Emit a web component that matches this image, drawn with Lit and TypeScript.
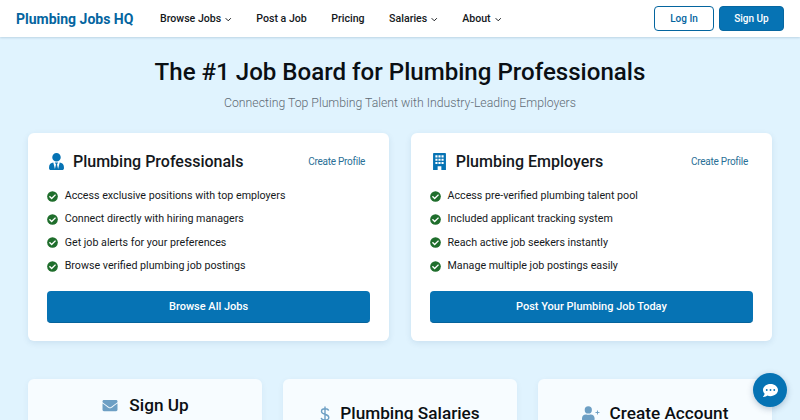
import { LitElement, css, html, svg } from 'lit'
import { customElement } from 'lit/decorators.js'

const chevron = html`<svg class="chev" viewBox="0 0 10 6"><path d="M1 1l4 4 4-4" fill="none" stroke="currentColor" stroke-width="1.5"/></svg>`

const check = html`<svg class="check" viewBox="0 0 512 512"><path fill="#1f6e2c" d="M256 8a248 248 0 1 0 0 496 248 248 0 0 0 0-496z"/><path fill="#fff" d="M227 387l184-184c6-6 6-16 0-22l-23-23c-6-6-16-6-22 0L216 308l-70-70c-6-6-16-6-22 0l-23 23c-6 6-6 16 0 22l104 104c6 6 16 6 22 0z"/></svg>`

const userTie = svg`<path d="M224 256a128 128 0 1 0 0-256 128 128 0 0 0 0 256zm96 32l-48 192-32-136 32-56H176l32 56-32 136-48-192C57 291 0 349 0 422v42c0 26 22 48 48 48h352c26 0 48-22 48-48v-42c0-73-57-131-128-134z"/>`

// solid block with three rows of windows and a door notch
const building = svg`<path fill-rule="evenodd" d="M60 0h328c17 0 30 13 30 30v482H280V400h-112v112H30V30C30 13 43 0 60 0zM100 70v64h64V70zm92 0v64h64V70zm92 0v64h64V70zM100 170v64h64v-64zm92 0v64h64v-64zm92 0v64h64v-64zM100 270v64h64v-64zm92 0v64h64v-64zm92 0v64h64v-64z"/>`

const envelope = svg`<path d="M502 190c4-3 10 0 10 5v205c0 26-22 48-48 48H48c-26 0-48-22-48-48V195c0-5 6-8 10-5 22 17 52 39 154 113 21 15 57 48 92 48s72-33 92-48c102-74 132-96 154-113zM256 320c23 0 57-29 73-41 133-97 143-105 174-129 6-5 9-12 9-19v-19c0-26-22-48-48-48H48C22 64 0 86 0 112v19c0 7 3 14 9 19 31 24 41 32 174 129 16 12 50 41 73 41z"/>`

const dollar = svg`<path fill="none" stroke="#6d9fc4" stroke-width="1.4" d="M8.6 4.6C8.2 3.4 7 2.8 5 2.8 2.8 2.8 1.5 3.9 1.5 5.4 1.5 9 8.8 7.4 8.8 11.4 8.8 13 7.300 14 5 14 2.800 14 1.500 13.200 1.200 11.800M5 .5v16"/>`

const userPlus = svg`<path d="M224 256a128 128 0 1 0 0-256 128 128 0 0 0 0 256zm90 32h-17a174 174 0 0 1-146 0h-17C60 288 0 348 0 422v42c0 26 22 48 48 48h352c26 0 48-22 48-48v-42c0-74-60-134-134-134z"/><path fill="none" stroke="#6d9fc4" stroke-width="34" d="M480 220h140M550 150v140"/>`

const heroCards = [
   {
      title: 'Plumbing Professionals',
      icon: html`<svg class="hero-icon" viewBox="0 0 448 512">${userTie}</svg>`,
      items: [
         'Access exclusive positions with top employers',
         'Connect directly with hiring managers',
         'Get job alerts for your preferences',
         'Browse verified plumbing job postings'
      ],
      cta: 'Browse All Jobs'
   },
   {
      title: 'Plumbing Employers',
      icon: html`<svg class="hero-icon" viewBox="0 0 448 512">${building}</svg>`,
      items: [
         'Access pre-verified plumbing talent pool',
         'Included applicant tracking system',
         'Reach active job seekers instantly',
         'Manage multiple job postings easily'
      ],
      cta: 'Post Your Plumbing Job Today'
   }
]

@customElement('app-root')
export class AppRoot extends LitElement {

   render() {
      return html`
         <header class="topbar">
            <span class="brand">Plumbing Jobs HQ</span>
            <nav class="nav">
               <a>Browse Jobs ${chevron}</a>
               <a>Post a Job</a>
               <a>Pricing</a>
               <a>Salaries ${chevron}</a>
               <a>About ${chevron}</a>
            </nav>
            <div class="auth">
               <button class="btn outline">Log In</button>
               <button class="btn solid">Sign Up</button>
            </div>
         </header>
         <main class="page">
            <h1>The #1 Job Board for Plumbing Professionals</h1>
            <p class="lead">Connecting Top Plumbing Talent with Industry-Leading Employers</p>
            <section class="heroes">
               ${heroCards.map(c => html`
                  <article class="card">
                     <div class="card-head">
                        ${c.icon}
                        <h2>${c.title}</h2>
                        <a class="profile">Create Profile</a>
                     </div>
                     <ul>
                        ${c.items.map(i => html`<li>${check}<span>${i}</span></li>`)}
                     </ul>
                     <button class="cta">${c.cta}</button>
                  </article>
               `)}
            </section>
            <section class="lower">
               <article class="mini first">
                  <svg class="mini-icon" viewBox="0 0 512 512">${envelope}</svg>
                  <h3>Sign Up</h3>
               </article>
               <article class="mini">
                  <svg class="mini-icon dollar" viewBox="0 0 10 17">${dollar}</svg>
                  <h3>Plumbing Salaries</h3>
               </article>
               <article class="mini">
                  <svg class="mini-icon" viewBox="0 0 640 512">${userPlus}</svg>
                  <h3>Create Account</h3>
               </article>
            </section>
         </main>
         <button class="chat" aria-label="Chat">
            <svg viewBox="0 0 512 512"><path fill="#fff" d="M256 32C115 32 0 125 0 240c0 50 22 95 58 131-13 50-54 94-55 95-3 2-3 6-2 9s4 5 7 5c66 0 116-32 141-51 33 12 69 19 107 19 141 0 256-93 256-208S397 32 256 32z"/><g fill="#0673b4"><circle cx="128" cy="240" r="32"/><circle cx="256" cy="240" r="32"/><circle cx="384" cy="240" r="32"/></g></svg>
         </button>
      `
   }

   static styles = css`
   :host {
      display: block;
      height: 420px;
      overflow: hidden;
      background: #e0f3fe;
      font-family: Roboto, "Noto Sans", sans-serif;
      color: #0b0f13;
   }
   * {
      box-sizing: border-box;
      margin: 0;
      padding: 0;
   }
   .topbar {
      display: flex;
      align-items: center;
      height: 37px;
      padding: 0 16px;
      background: #fff;
      box-shadow: 0 1px 2px rgba(0, 60, 100, 0.16);
   }
   .brand {
      width: 144px;
      font-size: 14px;
      font-weight: 700;
      color: #04659f;
      white-space: nowrap;
   }
   .nav {
      display: flex;
      align-items: center;
      gap: 24.5px;
      font-size: 10.6px;
      font-weight: 500;
      color: #14181c;
   }
   .nav a {
      display: flex;
      align-items: center;
      gap: 4px;
      white-space: nowrap;
   }
   .chev {
      width: 6.5px;
      height: 5px;
      margin-top: 2px;
   }
   .auth {
      display: flex;
      gap: 5px;
      margin-left: auto;
   }
   .btn {
      height: 25px;
      font: 500 10px Roboto, sans-serif;
      border-radius: 4px;
      cursor: pointer;
   }
   .btn.outline {
      width: 60px;
      background: #fff;
      border: 1px solid #04659f;
      color: #04659f;
   }
   .btn.solid {
      width: 65px;
      background: #0673b4;
      border: 1px solid #0667a1;
      color: #fff;
   }
   .page {
      padding: 19px 28px 0;
   }
   h1 {
      text-align: center;
      font-size: 24.1px;
      line-height: 32px;
      font-weight: 500;
      color: #0a0f14;
   }
   .lead {
      margin-top: 7px;
      text-align: center;
      font-size: 12.25px;
      line-height: 16px;
      font-weight: 300;
      color: #5f6b75;
   }
   .heroes {
      display: grid;
      grid-template-columns: 1fr 1fr;
      gap: 21.7px;
      margin-top: 22px;
   }
   .card {
      height: 208px;
      padding: 17px 18.7px 0;
      background: #fff;
      border-radius: 6px;
      box-shadow: 0 2px 6px rgba(0, 70, 120, 0.1);
   }
   .card-head {
      display: flex;
      align-items: center;
      height: 22px;
      padding: 0 5.3px 0 2.3px;
   }
   .hero-icon {
      width: 15px;
      height: 17px;
      fill: #0673b4;
      margin-right: 9px;
      flex: none;
   }
   h2 {
      font-size: 16px;
      font-weight: 500;
      color: #14181c;
      white-space: nowrap;
   }
   .profile {
      margin-left: auto;
      font-size: 10px;
      letter-spacing: -0.25px;
      color: #2a6f96;
      white-space: nowrap;
   }
   ul {
      list-style: none;
      margin-top: 12px;
   }
   li {
      display: flex;
      align-items: center;
      height: 23.3px;
      font-size: 10.7px;
      color: #16191c;
   }
   .check {
      width: 11px;
      height: 11px;
      margin: 1px 7px 0 0;
      flex: none;
   }
   .cta {
      display: block;
      width: 100%;
      height: 32px;
      margin-top: 14px;
      background: #0673b4;
      border: none;
      border-bottom: 1px solid #05639b;
      border-radius: 4px;
      color: #fff;
      font: 500 11px Roboto, sans-serif;
      cursor: pointer;
   }
   .lower {
      display: grid;
      grid-template-columns: repeat(3, 1fr);
      gap: 21px;
      margin-top: 38px;
   }
   .mini {
      display: flex;
      align-items: flex-start;
      justify-content: center;
      gap: 10px;
      height: 110px;
      padding-top: 24px;
      background: #f7fcff;
      border-radius: 6px;
      box-shadow: 0 2px 6px rgba(0, 70, 120, 0.06);
   }
   .mini.first {
      padding-top: 16px;
   }
   h3 {
      font-size: 17.2px;
      line-height: 20px;
      font-weight: 500;
      color: #0b0f13;
      white-space: nowrap;
   }
   .mini-icon {
      height: 15px;
      width: 18px;
      margin-top: 3px;
      fill: #6d9fc4;
      flex: none;
   }
   .mini-icon.dollar {
      width: 10px;
      height: 17px;
   }
   .chat {
      position: fixed;
      left: 753px;
      top: 373px;
      width: 34px;
      height: 34px;
      border: none;
      border-radius: 50%;
      background: #0673b4;
      box-shadow: 0 2px 6px rgba(0, 40, 80, 0.25);
      display: flex;
      align-items: center;
      justify-content: center;
   }
   .chat svg {
      width: 15px;
      height: 15px;
   }
   `
}
